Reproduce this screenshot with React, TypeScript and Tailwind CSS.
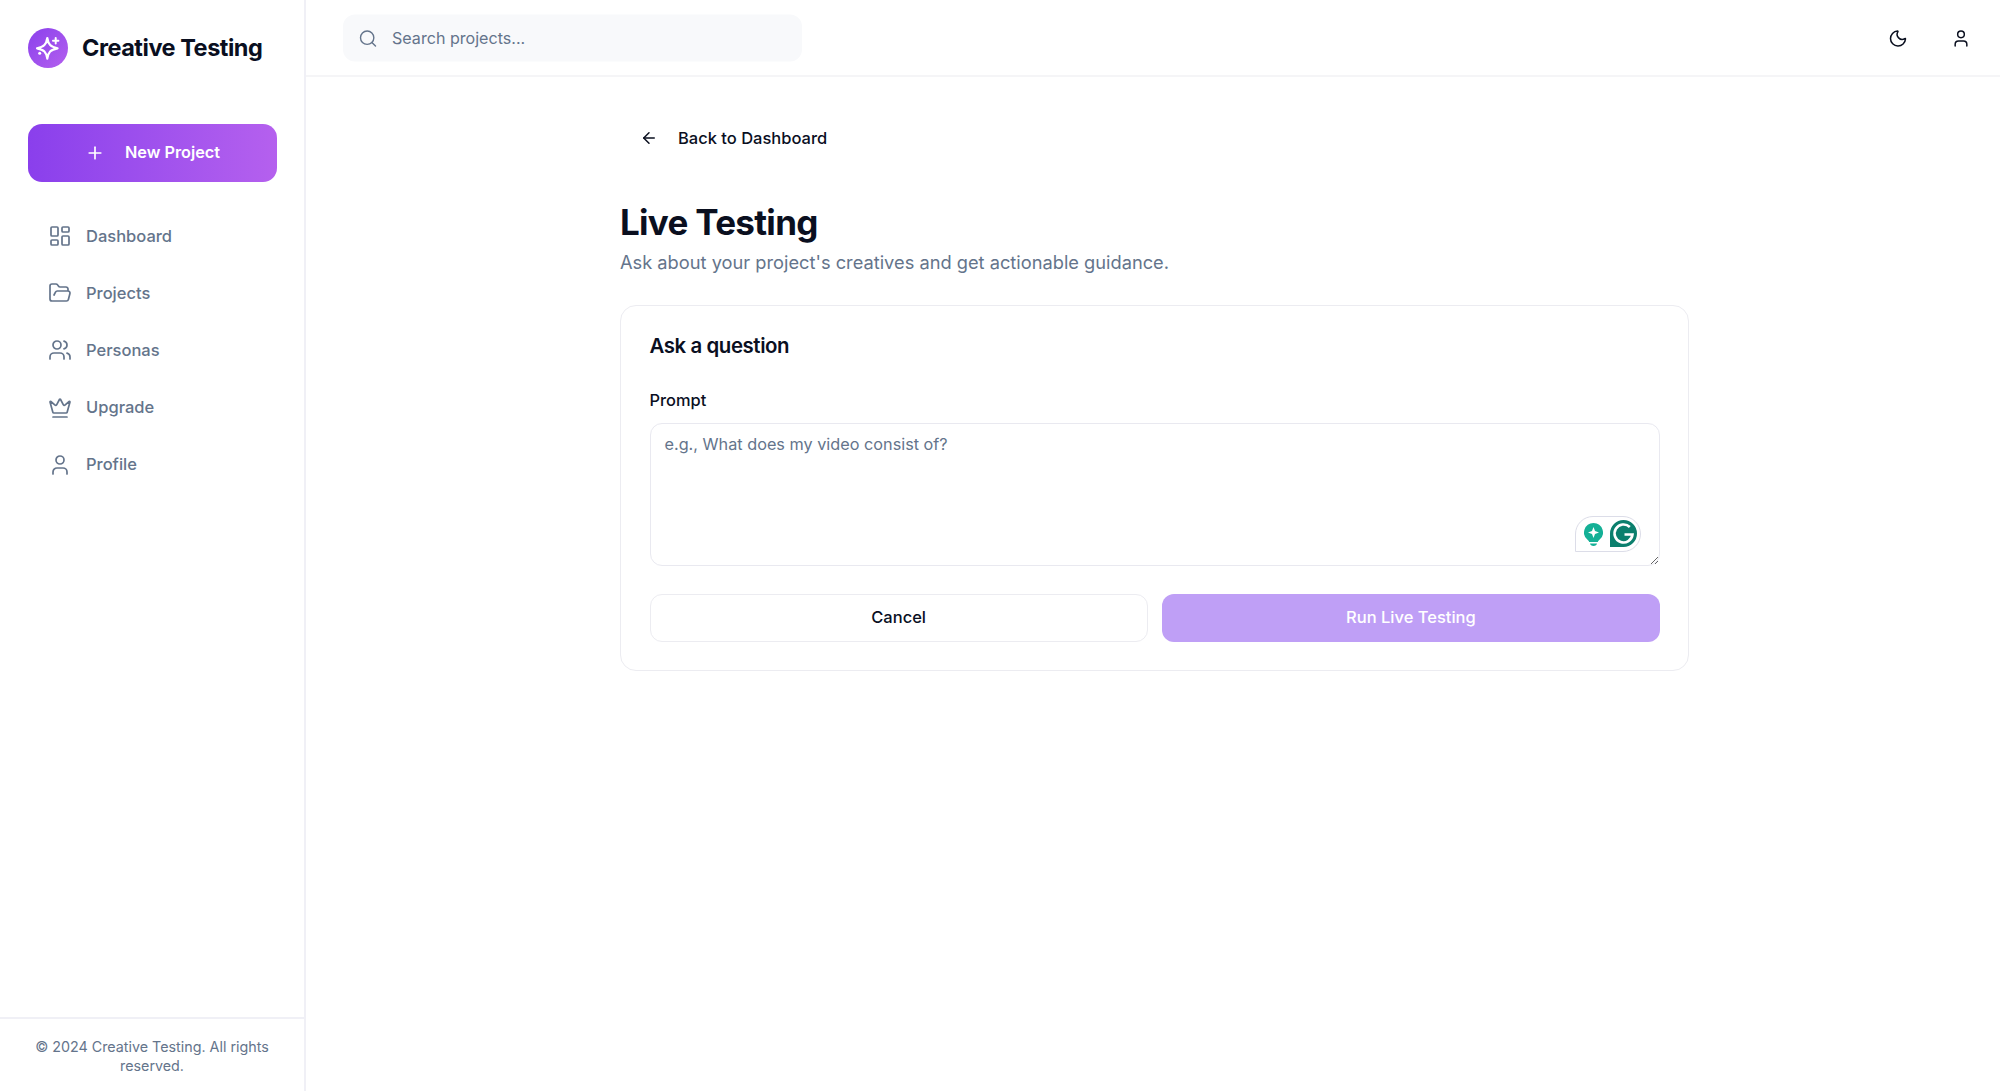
import { ArrowLeft, Crown, FolderOpen, LayoutDashboard, Moon, Plus, Search, User, Users } from "lucide-react";

const navItems = [
  { label: "Dashboard", icon: LayoutDashboard },
  { label: "Projects", icon: FolderOpen },
  { label: "Personas", icon: Users },
  { label: "Upgrade", icon: Crown },
  { label: "Profile", icon: User },
];

const GrammarlyBadge = () => (
  <div className="absolute right-[19px] bottom-[14px] flex h-[36px] w-[66px] items-center gap-[7px] rounded-[18px] rounded-bl-none border border-[#dcdde8] bg-white pl-[8px]">
    <svg width="19" height="24" viewBox="0 0 19 24" className="translate-y-[1px]">
      <path d="M9.500 0a9.500 9.500 0 0 1 5.500 17.200c-.6.4-1 1-1.200 1.800H5.200c-.2-.8-.6-1.400-1.200-1.800A9.500 9.500 0 0 1 9.500 0z" fill="#14b096" />
      <path d="M9.500 4l1.500 4 4 1.500-4 1.500-1.500 4-1.500-4-4-1.500 4-1.500z" fill="#fff" />
      <path d="M6 20.500h7c-.2 1.500-1.500 2.500-3.500 2.500S6.200 22 6 20.500z" fill="#14b096" />
    </svg>
    <svg width="27" height="27" viewBox="0 0 27 27">
      <path d="M13.500 0a13.500 13.500 0 0 1 0 27H0V13.500A13.500 13.500 0 0 1 13.500 0z" fill="#0b7f6d" />
      <path d="M19.800 7a9 9 0 1 0 2.700 7.500h-8" fill="none" stroke="#fff" strokeWidth="2.600" />
    </svg>
  </div>
);

const App = () => {
  return (
    <div className="flex h-[1091px] w-[2000px] overflow-hidden bg-white font-['Inter',sans-serif]">
      <aside className="flex w-[306px] shrink-0 flex-col border-r-2 border-[#f0f0f6]">
        <div className="flex h-[95px] items-center gap-[14px] pl-[28px]">
          <svg width="40" height="40" viewBox="0 0 40 40" className="rounded-full bg-gradient-to-br from-[#8b3fec] to-[#b45fee]">
            <path d="M19.300 10C20.300 16.500 22.500 19 29.600 20.300C22.500 21.600 20.300 24 19.300 30.600C18.300 24 16 21.600 9 20.300C16 19 18.300 16.500 19.300 10Z" fill="none" stroke="#fff" strokeWidth="2.200" strokeLinejoin="round" />
            <path d="M27.700 10v5.400M25 12.700h5.400" stroke="#fff" strokeWidth="2" strokeLinecap="round" />
            <circle cx="11.700" cy="25.300" r="1.500" fill="#fff" />
          </svg>
          <span className="text-[23.500px] font-bold tracking-[-0.02em] text-[#0a0f1f]">Creative Testing</span>
        </div>
        <div className="pt-[29px] pr-[27px] pl-[28px]">
          <button className="flex h-[58px] w-full items-center justify-center gap-[20px] rounded-[14px] bg-gradient-to-r from-[#8a3fec] to-[#b560ee] pb-[1px] text-[16.300px] font-semibold text-white">
            <Plus className="h-[20px] w-[20px]" strokeWidth={2} />
            New Project
          </button>
        </div>
        <nav className="flex flex-col pt-[25.500px]">
          {navItems.map(({ label, icon: Icon }) => (
            <a key={label} className="flex h-[57.200px] items-center gap-[14px] pl-[48px] text-[16.500px] font-medium text-[#64748b]">
              <Icon className="h-[24px] w-[24px]" strokeWidth={1.700} />
              {label}
            </a>
          ))}
        </nav>
        <div className="mt-auto border-t-2 border-[#f0f0f6] px-[30px] pt-[18px] pb-[16px] text-center text-[14.300px] leading-[19px] text-[#64748b]">
          © 2024 Creative Testing. All rights reserved.
        </div>
      </aside>

      <div className="flex min-w-0 flex-1 flex-col">
        <header className="flex h-[77px] shrink-0 items-center justify-between border-b-2 border-[#f5f5f7] pr-[29px] pl-[37px]">
          <div className="flex h-[47px] w-[459px] translate-y-[0.500px] items-center gap-[14px] rounded-[12px] bg-[#f8f9fb] pl-[15px] text-[16.100px] text-[#64748b]">
            <Search className="h-[20px] w-[20px]" strokeWidth={1.700} />
            Search projects...
          </div>
          <div className="flex translate-y-[0.500px] items-center gap-[43px] text-[#0a0f1f]">
            <Moon className="h-[20px] w-[20px]" strokeWidth={1.800} />
            <User className="h-[20px] w-[20px]" strokeWidth={1.800} />
          </div>
        </header>

        <main className="flex-1 pl-[3px]">
          <div className="mx-auto w-[1069px] pt-[46px]">
            <a className="ml-[20px] flex h-[30px] items-center gap-[20px] text-[16.500px] font-medium text-[#0a0f1f]">
              <ArrowLeft className="h-[18px] w-[18px]" strokeWidth={2} />
              Back to Dashboard
            </a>
            <h1 className="mt-[47px] text-[35px] leading-[44px] font-bold tracking-[-0.02em] text-[#0a0f1f]">Live Testing</h1>
            <p className="mt-[4px] text-[18.250px] leading-[28px] text-[#64748b]">Ask about your project's creatives and get actionable guidance.</p>
            <section className="mt-[29px] rounded-[16px] border border-[#ececf1] bg-white pt-[26px] pr-[28px] pb-[28px] pl-[28.500px]">
              <h2 className="text-[20.400px] leading-[28px] font-semibold tracking-[-0.02em] text-[#0a0f1f]">Ask a question</h2>
              <label className="mt-[29px] block text-[16.400px] leading-[22px] font-medium text-[#0a0f1f]">Prompt</label>
              <div className="relative mt-[11.500px] flex">
                <textarea
                  readOnly
                  placeholder="e.g., What does my video consist of?"
                  className="h-[143px] w-full rounded-[12px] border border-[#e9e9f0] px-[14px] pt-[9.500px] pb-[10px] text-[16.250px] leading-[22px] outline-none placeholder:text-[#64748b]"
                />
                <GrammarlyBadge />
              </div>
              <div className="mt-[28px] grid grid-cols-2 gap-[14px]">
                <button className="h-[48px] rounded-[12px] border border-[#ececf1] bg-white text-[16.500px] font-medium text-[#0a0f1f]">Cancel</button>
                <button className="h-[48px] rounded-[12px] bg-[#bf9ff6] text-[16.500px] font-medium text-white">Run Live Testing</button>
              </div>
            </section>
          </div>
        </main>
      </div>
    </div>
  );
};

export default App;
